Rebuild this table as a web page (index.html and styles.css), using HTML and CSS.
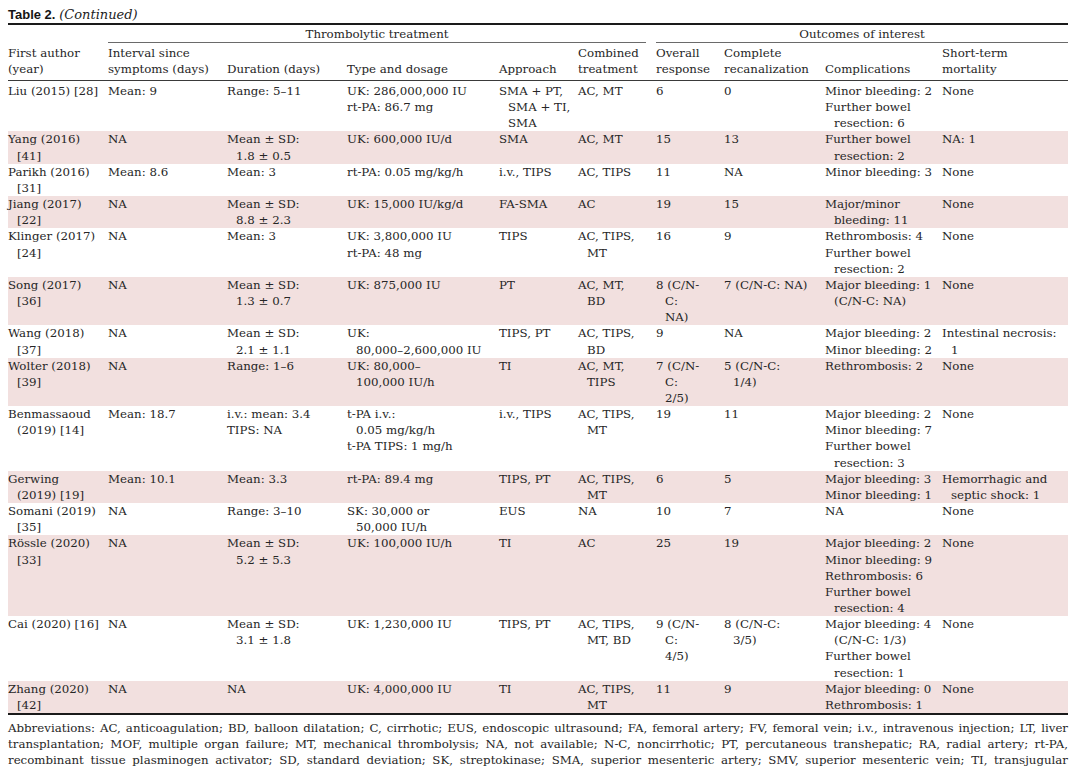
FILE: index.html
```html
<!DOCTYPE html>
<html lang="en">
<head>
<meta charset="utf-8">
<title>Table 2 (Continued)</title>
<link rel="stylesheet" href="styles.css">
</head>
<body>
<div class="title"><b>Table 2.</b> <i>(Continued)</i></div>
<table class="tbl">
  <colgroup>
    <col class="c1"><col class="c2"><col class="c3"><col class="c4"><col class="c5">
    <col class="c6"><col class="c7"><col class="c8"><col class="c9"><col class="c10">
  </colgroup>
  <thead>
    <tr class="grp">
      <th></th>
      <th colspan="5"><div class="gl gl-a">Thrombolytic treatment</div></th>
      <th colspan="4"><div class="gl">Outcomes of interest</div></th>
    </tr>
    <tr class="sub">
      <th>First author<br>(year)</th>
      <th>Interval since<br>symptoms (days)</th>
      <th>Duration (days)</th>
      <th>Type and dosage</th>
      <th>Approach</th>
      <th>Combined<br>treatment</th>
      <th>Overall<br>response</th>
      <th>Complete<br>recanalization</th>
      <th>Complications</th>
      <th>Short-term<br>mortality</th>
    </tr>
  </thead>
  <tbody>
    <tr>
      <td><div class="it">Liu (2015) [28]</div></td>
      <td><div class="it">Mean: 9</div></td>
      <td><div class="it">Range: 5–11</div></td>
      <td><div class="it">UK: 286,000,000 IU</div><div class="it">rt-PA: 86.7 mg</div></td>
      <td><div class="it">SMA + PT,<br>SMA + TI,<br>SMA</div></td>
      <td><div class="it">AC, MT</div></td>
      <td><div class="it">6</div></td>
      <td><div class="it">0</div></td>
      <td><div class="it">Minor bleeding: 2</div><div class="it">Further bowel<br>resection: 6</div></td>
      <td><div class="it">None</div></td>
    </tr>
    <tr class="alt">
      <td><div class="it">Yang (2016)<br>[41]</div></td>
      <td><div class="it">NA</div></td>
      <td><div class="it">Mean ± SD:<br>1.8 ± 0.5</div></td>
      <td><div class="it">UK: 600,000 IU/d</div></td>
      <td><div class="it">SMA</div></td>
      <td><div class="it">AC, MT</div></td>
      <td><div class="it">15</div></td>
      <td><div class="it">13</div></td>
      <td><div class="it">Further bowel<br>resection: 2</div></td>
      <td><div class="it">NA: 1</div></td>
    </tr>
    <tr>
      <td><div class="it">Parikh (2016)<br>[31]</div></td>
      <td><div class="it">Mean: 8.6</div></td>
      <td><div class="it">Mean: 3</div></td>
      <td><div class="it">rt-PA: 0.05 mg/kg/h</div></td>
      <td><div class="it">i.v., TIPS</div></td>
      <td><div class="it">AC, TIPS</div></td>
      <td><div class="it">11</div></td>
      <td><div class="it">NA</div></td>
      <td><div class="it">Minor bleeding: 3</div></td>
      <td><div class="it">None</div></td>
    </tr>
    <tr class="alt">
      <td><div class="it">Jiang (2017)<br>[22]</div></td>
      <td><div class="it">NA</div></td>
      <td><div class="it">Mean ± SD:<br>8.8 ± 2.3</div></td>
      <td><div class="it">UK: 15,000 IU/kg/d</div></td>
      <td><div class="it">FA-SMA</div></td>
      <td><div class="it">AC</div></td>
      <td><div class="it">19</div></td>
      <td><div class="it">15</div></td>
      <td><div class="it">Major/minor<br>bleeding: 11</div></td>
      <td><div class="it">None</div></td>
    </tr>
    <tr>
      <td><div class="it">Klinger (2017)<br>[24]</div></td>
      <td><div class="it">NA</div></td>
      <td><div class="it">Mean: 3</div></td>
      <td><div class="it">UK: 3,800,000 IU</div><div class="it">rt-PA: 48 mg</div></td>
      <td><div class="it">TIPS</div></td>
      <td><div class="it">AC, TIPS,<br>MT</div></td>
      <td><div class="it">16</div></td>
      <td><div class="it">9</div></td>
      <td><div class="it">Rethrombosis: 4</div><div class="it">Further bowel<br>resection: 2</div></td>
      <td><div class="it">None</div></td>
    </tr>
    <tr class="alt">
      <td><div class="it">Song (2017)<br>[36]</div></td>
      <td><div class="it">NA</div></td>
      <td><div class="it">Mean ± SD:<br>1.3 ± 0.7</div></td>
      <td><div class="it">UK: 875,000 IU</div></td>
      <td><div class="it">PT</div></td>
      <td><div class="it">AC, MT,<br>BD</div></td>
      <td><div class="it">8 (C/N-<br>C:<br>NA)</div></td>
      <td><div class="it">7 (C/N-C: NA)</div></td>
      <td><div class="it">Major bleeding: 1<br>(C/N-C: NA)</div></td>
      <td><div class="it">None</div></td>
    </tr>
    <tr>
      <td><div class="it">Wang (2018)<br>[37]</div></td>
      <td><div class="it">NA</div></td>
      <td><div class="it">Mean ± SD:<br>2.1 ± 1.1</div></td>
      <td><div class="it">UK:<br>80,000–2,600,000 IU</div></td>
      <td><div class="it">TIPS, PT</div></td>
      <td><div class="it">AC, TIPS,<br>BD</div></td>
      <td><div class="it">9</div></td>
      <td><div class="it">NA</div></td>
      <td><div class="it">Major bleeding: 2</div><div class="it">Minor bleeding: 2</div></td>
      <td><div class="it">Intestinal necrosis:<br>1</div></td>
    </tr>
    <tr class="alt">
      <td><div class="it">Wolter (2018)<br>[39]</div></td>
      <td><div class="it">NA</div></td>
      <td><div class="it">Range: 1–6</div></td>
      <td><div class="it">UK: 80,000–<br>100,000 IU/h</div></td>
      <td><div class="it">TI</div></td>
      <td><div class="it">AC, MT,<br>TIPS</div></td>
      <td><div class="it">7 (C/N-<br>C:<br>2/5)</div></td>
      <td><div class="it">5 (C/N-C:<br>1/4)</div></td>
      <td><div class="it">Rethrombosis: 2</div></td>
      <td><div class="it">None</div></td>
    </tr>
    <tr>
      <td><div class="it">Benmassaoud<br>(2019) [14]</div></td>
      <td><div class="it">Mean: 18.7</div></td>
      <td><div class="it">i.v.: mean: 3.4</div><div class="it">TIPS: NA</div></td>
      <td><div class="it">t-PA i.v.:<br>0.05 mg/kg/h</div><div class="it">t-PA TIPS: 1 mg/h</div></td>
      <td><div class="it">i.v., TIPS</div></td>
      <td><div class="it">AC, TIPS,<br>MT</div></td>
      <td><div class="it">19</div></td>
      <td><div class="it">11</div></td>
      <td><div class="it">Major bleeding: 2</div><div class="it">Minor bleeding: 7</div><div class="it">Further bowel<br>resection: 3</div></td>
      <td><div class="it">None</div></td>
    </tr>
    <tr class="alt">
      <td><div class="it">Gerwing<br>(2019) [19]</div></td>
      <td><div class="it">Mean: 10.1</div></td>
      <td><div class="it">Mean: 3.3</div></td>
      <td><div class="it">rt-PA: 89.4 mg</div></td>
      <td><div class="it">TIPS, PT</div></td>
      <td><div class="it">AC, TIPS,<br>MT</div></td>
      <td><div class="it">6</div></td>
      <td><div class="it">5</div></td>
      <td><div class="it">Major bleeding: 3</div><div class="it">Minor bleeding: 1</div></td>
      <td><div class="it">Hemorrhagic and<br>septic shock: 1</div></td>
    </tr>
    <tr>
      <td><div class="it">Somani (2019)<br>[35]</div></td>
      <td><div class="it">NA</div></td>
      <td><div class="it">Range: 3–10</div></td>
      <td><div class="it">SK: 30,000 or<br>50,000 IU/h</div></td>
      <td><div class="it">EUS</div></td>
      <td><div class="it">NA</div></td>
      <td><div class="it">10</div></td>
      <td><div class="it">7</div></td>
      <td><div class="it">NA</div></td>
      <td><div class="it">None</div></td>
    </tr>
    <tr class="alt">
      <td><div class="it">Rössle (2020)<br>[33]</div></td>
      <td><div class="it">NA</div></td>
      <td><div class="it">Mean ± SD:<br>5.2 ± 5.3</div></td>
      <td><div class="it">UK: 100,000 IU/h</div></td>
      <td><div class="it">TI</div></td>
      <td><div class="it">AC</div></td>
      <td><div class="it">25</div></td>
      <td><div class="it">19</div></td>
      <td><div class="it">Major bleeding: 2</div><div class="it">Minor bleeding: 9</div><div class="it">Rethrombosis: 6</div><div class="it">Further bowel<br>resection: 4</div></td>
      <td><div class="it">None</div></td>
    </tr>
    <tr>
      <td><div class="it">Cai (2020) [16]</div></td>
      <td><div class="it">NA</div></td>
      <td><div class="it">Mean ± SD:<br>3.1 ± 1.8</div></td>
      <td><div class="it">UK: 1,230,000 IU</div></td>
      <td><div class="it">TIPS, PT</div></td>
      <td><div class="it">AC, TIPS,<br>MT, BD</div></td>
      <td><div class="it">9 (C/N-<br>C:<br>4/5)</div></td>
      <td><div class="it">8 (C/N-C:<br>3/5)</div></td>
      <td><div class="it">Major bleeding: 4<br>(C/N-C: 1/3)</div><div class="it">Further bowel<br>resection: 1</div></td>
      <td><div class="it">None</div></td>
    </tr>
    <tr class="alt last">
      <td><div class="it">Zhang (2020)<br>[42]</div></td>
      <td><div class="it">NA</div></td>
      <td><div class="it">NA</div></td>
      <td><div class="it">UK: 4,000,000 IU</div></td>
      <td><div class="it">TI</div></td>
      <td><div class="it">AC, TIPS,<br>MT</div></td>
      <td><div class="it">11</div></td>
      <td><div class="it">9</div></td>
      <td><div class="it">Major bleeding: 0</div><div class="it">Rethrombosis: 1</div></td>
      <td><div class="it">None</div></td>
    </tr>
  </tbody>
</table>
<div class="notes">
  <div class="ln">Abbreviations: AC, anticoagulation; BD, balloon dilatation; C, cirrhotic; EUS, endoscopic ultrasound; FA, femoral artery; FV, femoral vein; i.v., intravenous injection; LT, liver</div>
  <div class="ln">transplantation; MOF, multiple organ failure; MT, mechanical thrombolysis; NA, not available; N-C, noncirrhotic; PT, percutaneous transhepatic; RA, radial artery; rt-PA,</div>
  <div class="ln">recombinant tissue plasminogen activator; SD, standard deviation; SK, streptokinase; SMA, superior mesenteric artery; SMV, superior mesenteric vein; TI, transjugular</div>
</div>
</body>
</html>
```
FILE: styles.css
```css
html, body {
  margin: 0;
  background: #ffffff;
}
body {
  padding: 0 12px 0 8px;
  font-family: "DejaVu Serif", "Liberation Serif", serif;
  font-size: 11.8px;
  color: #262626;
  overflow: hidden;
}
.title {
  box-sizing: border-box;
  height: 23px;
  padding-top: 7px;
  line-height: 16px;
  white-space: nowrap;
}
.title b {
  font-family: "Liberation Sans", Arial, sans-serif;
  font-weight: 700;
  font-size: 13px;
  color: #141414;
}
.title i {
  font-size: 13px;
  color: #222;
}
.tbl {
  width: 1060px;
  border-collapse: collapse;
  table-layout: fixed;
  border-top: 2px solid #1a1a1a;
}
.c1 { width: 100px; }
.c2 { width: 119px; }
.c3 { width: 120px; }
.c4 { width: 152px; }
.c5 { width: 79px; }
.c6 { width: 78px; }
.c7 { width: 68px; }
.c8 { width: 101px; }
.c9 { width: 117px; }
.c10 { width: 126px; }
th, td {
  padding: 0;
  text-align: left;
  font-weight: 400;
  white-space: nowrap;
  line-height: 16.15px;
  vertical-align: top;
}
.grp th {
  padding-top: 2px;
  line-height: 15px;
  text-align: center;
  vertical-align: bottom;
}
.gl {
  border-bottom: 1px solid #6a6a6a;
}
.gl-a {
  margin-right: 10px;
}
.sub th {
  padding-top: 2px;
  padding-bottom: 3px;
  vertical-align: bottom;
  line-height: 16px;
  border-bottom: 1px solid #3a3a3a;
}
.tbl tbody tr:first-child td {
  padding-top: 2px;
}
.alt td {
  background: #f2e0df;
}
.last td {
  border-bottom: 2px solid #1a1a1a;
}
.it {
  padding-left: 9px;
  text-indent: -9px;
}
.notes {
  width: 1060px;
  padding-top: 5px;
  line-height: 16px;
}
.ln {
  text-align: justify;
  text-align-last: justify;
  white-space: nowrap;
}
```
